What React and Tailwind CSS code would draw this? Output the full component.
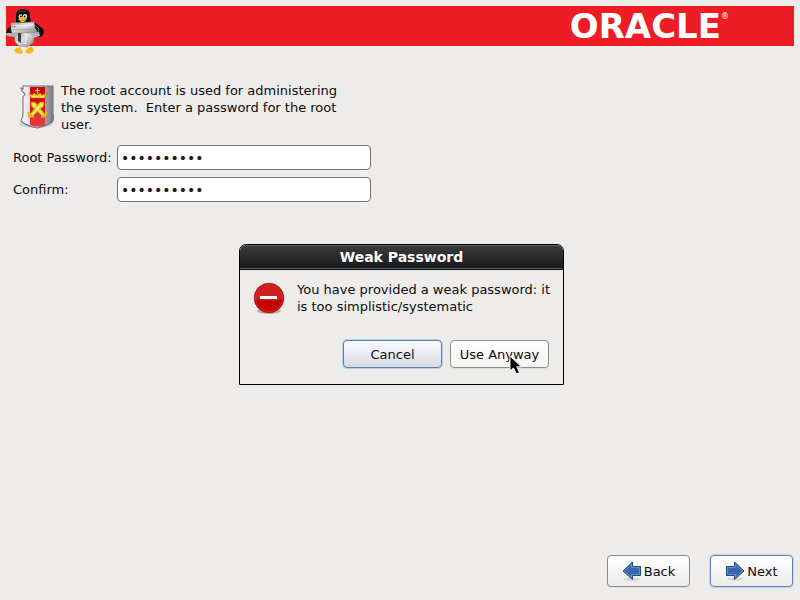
import { useState } from "react";

const buttonBase =
  "flex items-center justify-center rounded-[4px] border text-[13px] leading-[17px] shadow-[0_1px_1px_rgba(0,0,0,0.06)]";

function Penguin() {
  return (
    <svg viewBox="0 0 40 48" className="h-12 w-10" aria-hidden="true">
      <defs>
        <linearGradient id="steel" x1="0" y1="0" x2="1" y2="1">
          <stop offset="0" stopColor="#a9a9a9" />
          <stop offset="0.45" stopColor="#dedede" />
          <stop offset="1" stopColor="#858585" />
        </linearGradient>
      </defs>
      {/* arms */}
      <path d="M7 18 C2 19 0 22 0 26 L3 28 L9 24Z" fill="#161616" />
      <path d="M26 14 C31 15 36 19 38 23 C38 27 36 29 32 29 L27 24Z" fill="#111" />
      <path d="M28 16 L33 21 L32 24" stroke="#666" strokeWidth="1" fill="none" />
      {/* feet */}
      <path d="M10 40 L14 39 L17 44 L15 46 L10 45 L8 42Z" fill="#f5b81c" />
      <path d="M21 41 L25 38 L28 41 L27 44 L23 46 L19 44Z" fill="#f5b81c" />
      {/* head */}
      <path d="M10 15 L10 7 Q10 1 17 1 Q24 1 24 8 L25 15Z" fill="#0c0c0c" />
      <path d="M13 4 Q16 2 19 4" stroke="#4b4b4b" strokeWidth="1" fill="none" />
      <ellipse cx="14.5" cy="8.5" rx="2" ry="2.2" fill="#d8d8d8" />
      <ellipse cx="19" cy="8.5" rx="2.2" ry="2.4" fill="#e8e8e8" />
      <circle cx="14.8" cy="8.6" r="1" fill="#111" />
      <circle cx="18.7" cy="8.6" r="1" fill="#111" />
      <path d="M12 11 L16 9 L21 11 L18 14 L15 14Z" fill="#f6c51d" />
      <path d="M13 12 L17 12.5 L20 11" stroke="#b87b08" strokeWidth="0.6" fill="none" />
      {/* armour */}
      <path d="M8 24 L29 24 L27 35 L21 39 L13 38 L9 34Z" fill="url(#steel)" stroke="#777" strokeWidth="0.5" />
      <path d="M5 15 L28 14 L29 20 L32 25 L6 25 L5 21Z" fill="url(#steel)" stroke="#8a8a8a" strokeWidth="0.5" />
      <path d="M0 25 L10 25 L11 29 L1 28Z" fill="#b5b5b5" />
      <path d="M24 26 L33 24 L34 28 L27 30Z" fill="#b8b8b8" />
      <path d="M7 18 L27 17" stroke="#f3f3f3" strokeWidth="1.2" />
      <path d="M7 22 L28 21" stroke="#999" strokeWidth="0.8" />
      <circle cx="8.5" cy="18.5" r="0.8" fill="#555" />
      <path d="M12 25 L15 25 L15 35 L12 33Z" fill="#3c3c3c" />
      <path d="M18 26 L21 26 L19 36" stroke="#f5f5f5" strokeWidth="1" fill="none" />
    </svg>
  );
}

function Shield() {
  return (
    <svg viewBox="0 0 40 48" className="h-12 w-10 shrink-0" aria-hidden="true">
      <defs>
        <linearGradient id="shieldSteel">
          <stop offset="0" stopColor="#f7f7f8" />
          <stop offset="0.45" stopColor="#d4d4d8" />
          <stop offset="1" stopColor="#77777e" />
        </linearGradient>
        <linearGradient id="shieldRed" x1="0" y1="0" x2="0" y2="1">
          <stop offset="0" stopColor="#c80508" />
          <stop offset="0.6" stopColor="#dc1618" />
          <stop offset="1" stopColor="#dc2628" />
        </linearGradient>
      </defs>
      <ellipse cx="19" cy="42" rx="17" ry="4" fill="#000" opacity="0.1" />
      <path
        d="M6 4 H36 V31 Q37 35 36 39 C32 43 27 44 21 46 C14 45 8 43 4 39 Q6 35 6 31 V15 L8 12 L5 9 L4 6 L6 7Z"
        fill="url(#shieldSteel)"
        stroke="#77777c"
        strokeWidth="1.1"
      />
      <path d="M13 5 H28 V43 Q21 46 13 43Z" fill="url(#shieldRed)" />
      <path d="M13 34 Q20 30 28 31 V43 Q21 46 13 43Z" fill="#ff8585" opacity="0.2" />
      <path d="M12 11 L15 13 L17 11 L20 13 L23 11 L25 13 L30 11 L28 16 H14Z" fill="#f3ca1c" stroke="#a86e00" strokeWidth="0.6" />
      <path d="M20.5 6 V12 M18 8.5 H23" stroke="#f8d535" strokeWidth="1.2" />
      <path d="M15 15 H27" stroke="#fff07d" strokeWidth="1" />
      {/* crossed swords */}
      <g stroke="#9c7500" strokeWidth="0.6" fill="#f2d72c">
        <path d="M14 20 H18 L28 32 L30 34 L28 36 L25 34 L14 24Z" />
        <path d="M27 20 H23 L13 32 L11 34 L13 36 L16 34 L27 24Z" />
      </g>
      <path d="M11 30 Q13 34 17 35 M30 30 Q28 34 24 35" stroke="#e0b716" strokeWidth="2" fill="none" />
      <path d="M16 22 L26 33 M25 22 L15 33" stroke="#fff8a8" strokeWidth="1" />
    </svg>
  );
}

function StopIcon() {
  return (
    <svg viewBox="0 -1 32 34" className="h-[34px] w-8 shrink-0" aria-hidden="true">
      <ellipse cx="16" cy="29" rx="12" ry="3" fill="#000" opacity="0.25" />
      <circle cx="16" cy="16" r="14.8" fill="#c40000" stroke="#a90b0b" strokeWidth="0.8" />
      <path d="M2 17 A14 14 0 0 1 30 17 Q16 20 2 17Z" fill="#d01f1f" />
      <circle cx="16" cy="16" r="13.6" fill="none" stroke="#d94040" strokeWidth="0.7" />
      <rect x="7" y="14" width="17" height="3" fill="#fff" />
    </svg>
  );
}

function Arrow({ flip }) {
  return (
    <svg viewBox="0 0 20 20" className="h-5 w-5 shrink-0" aria-hidden="true">
      <ellipse cx="10" cy="18" rx="8" ry="1.8" fill="#000" opacity="0.1" />
      <g transform={flip ? "translate(20 0) scale(-1 1)" : undefined}>
        <path d="M1.5 5.5 H9.5 V1 L19 10 L9.5 18.5 V14.5 H1.5Z" fill="#3768ac" stroke="#204a87" />
        <path d="M2.5 6.5 H10.5 V3.5 L17.5 10 L10.5 16.5 V13.5 H2.5Z" fill="none" stroke="#6d97cc" strokeWidth="0.8" />
      </g>
    </svg>
  );
}

function PasswordRow({ id, label, value, onChange }) {
  return (
    <>
      <label htmlFor={id}>{label}</label>
      <input
        id={id}
        type="password"
        value={value}
        onChange={(e) => onChange(e.target.value)}
        className="h-[25px] w-[254px] rounded-[4px] border border-[#777370] bg-white px-[3px] text-[14px] text-[#1a1a1a] outline-none"
      />
    </>
  );
}

function WeakPasswordDialog({ onClose }) {
  return (
    <div className="fixed inset-0 flex items-center justify-center pt-[29px] pl-[3px]">
      <div
        role="dialog"
        aria-labelledby="dialog-title"
        className="w-[325px] overflow-hidden rounded-t-[7px] border border-black bg-[#edeceb]"
      >
        <h2
          id="dialog-title"
          className="h-[25px] border-b border-[#0b0b12] bg-linear-to-b from-[#3c3c3c] via-[#2b2b2b] to-[#161616] text-center text-[14px] leading-6 font-bold text-white shadow-[inset_0_1px_0_#626262,inset_0_-1px_0_#46617f]"
        >
          Weak Password
        </h2>
        <div className="flex gap-3 pt-[11px] pr-1 pl-[13px]">
          <StopIcon />
          <p className="leading-[17px]">
            You have provided a weak password: it
            <br />
            is too simplistic/systematic
          </p>
        </div>
        <div className="flex justify-end gap-2 px-[14px] pt-[25px] pb-4">
          <button
            onClick={onClose}
            className={`${buttonBase} h-7 w-[99px] border-[#5b7fae] bg-linear-to-b from-[#f8fafd] via-[#e9edf3] to-[#d5dae2] ring-1 ring-[#b8cfe8]`}
          >
            Cancel
          </button>
          <button
            onClick={onClose}
            className={`${buttonBase} relative h-7 w-[99px] border-[#8d8a87] bg-linear-to-b from-white to-[#f3f3f2]`}
          >
            Use Anyway
            <svg viewBox="0 0 14 20" className="absolute top-[14px] left-[58px] h-5 w-[14px]" aria-hidden="true">
              <path
                d="M1 1 V16 L4.5 13 L7.5 19 L10.5 17.5 L7.8 11.8 H12.5Z"
                fill="#000"
                stroke="#fff"
                strokeWidth="1"
              />
            </svg>
          </button>
        </div>
      </div>
    </div>
  );
}

export default function App() {
  const [password, setPassword] = useState("oracle1234");
  const [confirm, setConfirm] = useState("oracle1234");
  const [showDialog, setShowDialog] = useState(true);

  return (
    <div className="flex min-h-screen flex-col bg-[#edeceb] p-[6px] font-['DejaVu_Sans',sans-serif] text-[13px] leading-[17px] text-[#0c0c0c]">
      <header className="flex h-10 items-start justify-between bg-[#ee1c25] pt-[2px] pr-[65px]">
        <Penguin />
        <div className="flex items-start text-white">
          <span className="text-[34px] leading-9 font-bold">ORACLE</span>
          <span className="pt-1 text-[8px] leading-[10px]">®</span>
        </div>
      </header>

      <main className="flex-1 px-[7px] pt-9">
        <div className="flex items-start gap-1">
          <div className="pl-1">
            <Shield />
          </div>
          <p className="whitespace-pre">
            {"The root account is used for administering\nthe system.  Enter a password for the root\nuser."}
          </p>
        </div>
        <div className="mt-3 grid grid-cols-[104px_auto] items-center justify-start gap-y-[7px]">
          <PasswordRow id="root-password" label="Root Password:" value={password} onChange={setPassword} />
          <PasswordRow id="confirm" label="Confirm:" value={confirm} onChange={setConfirm} />
        </div>
      </main>

      <footer className="flex justify-end gap-5 pr-px pb-[7px]">
        <button className={`${buttonBase} h-8 w-[83px] gap-[2px] border-[#8d8a87] bg-linear-to-b from-white to-[#ecebea]`}>
          <Arrow flip />
          Back
        </button>
        <button className={`${buttonBase} h-8 w-[83px] gap-[2px] border-[#6286b5] bg-linear-to-b from-white to-[#ecebea] ring-1 ring-[#c3d6ec]`}>
          <Arrow />
          Next
        </button>
      </footer>

      {showDialog && <WeakPasswordDialog onClose={() => setShowDialog(false)} />}
    </div>
  );
}
